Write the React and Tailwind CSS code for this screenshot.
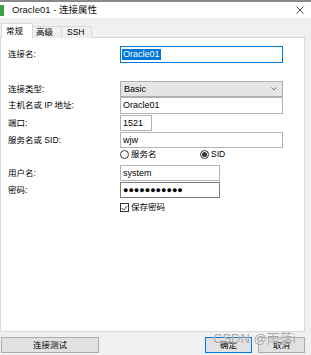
import React from 'react';

const font = { fontFamily: '"Liberation Sans", "Noto Sans CJK SC", sans-serif' };

function Label({ children }) {
  return <div className="w-[119px] pl-[7px] text-[8.5px] text-[#000] leading-none">{children}</div>;
}

function Input({ value, w = 'w-[163px]', border = 'border-[#b4b4b4]', h = 'h-[16px]' }) {
  return (
    <div className={`${w} ${h} border ${border} bg-white flex items-center px-[2px] text-[9px] text-black leading-none`}>
      {value}
    </div>
  );
}

export default function App() {
  return (
    <div className="w-[311px] h-[355px] bg-[#f0f0f0] relative overflow-hidden flex flex-col" style={font}>
      {/* Title bar */}
      <div className="h-[18px] bg-white border-t-2 border-[#8a8a8a] flex items-center relative">
        <div className="w-[4px] h-[11px] bg-[#3aa04a]" />
        <span className="ml-[8px] text-[9.5px] text-[#111] leading-none">Oracle01 - 连接属性</span>
        <svg className="absolute right-[7px] top-[4px]" width="8" height="8" viewBox="0 0 8 8">
          <path d="M0.5 0.5L7.5 7.5M7.5 0.5L0.5 7.5" stroke="#333" strokeWidth="0.9" />
        </svg>
      </div>

      {/* Tabs */}
      <div className="flex items-end mt-[5px] h-[15px] pl-[1px] relative z-10">
        <div className="w-[32px] h-[15px] bg-white border border-b-0 border-[#d9d9d9] flex items-center pl-[4px] text-[8.5px] leading-none">常规</div>
        <div className="w-[29px] h-[12px] bg-[#f0f0f0] border border-l-0 border-b-0 border-[#d9d9d9] flex items-center pl-[3px] text-[8.5px] leading-none">高级</div>
        <div className="w-[30px] h-[12px] bg-[#f0f0f0] border border-l-0 border-b-0 border-[#d9d9d9] flex items-center pl-[5px] text-[8.5px] leading-none">SSH</div>
      </div>

      {/* Panel */}
      <div className="w-[305px] h-[295px] -mt-[1px] bg-white border border-[#d9d9d9] flex flex-col">
        <div className="flex items-center mt-[8px]">
          <Label>连接名:</Label>
          <div className="w-[163px] h-[17px] border border-[#0078d7] bg-white flex items-center px-[1px]">
            <span className="bg-[#0078d7] text-white text-[9px] leading-[11px] px-[1px]">Oracle01</span>
          </div>
        </div>

        <div className="flex items-center mt-[18px]">
          <Label>连接类型:</Label>
          <div className="w-[163px] h-[16px] border border-[#adadad] bg-[#e5e5e5] flex items-center justify-between px-[3px] text-[9px] leading-none">
            <span>Basic</span>
            <svg width="6" height="4" viewBox="0 0 6 4" className="mr-[2px]">
              <path d="M0.5 0.5L3 3L5.5 0.5" fill="none" stroke="#555" strokeWidth="0.8" />
            </svg>
          </div>
        </div>

        <div className="flex items-center">
          <Label>主机名或 IP 地址:</Label>
          <Input value="Oracle01" h="h-[17px]" />
        </div>

        <div className="flex items-center mt-[1px]">
          <Label>端口:</Label>
          <Input value="1521" w="w-[32px]" />
        </div>

        <div className="flex items-center mt-[1px]">
          <Label>服务名或 SID:</Label>
          <Input value="wjw" />
        </div>

        <div className="flex items-center h-[12px] pl-[119px] text-[8.5px] leading-none">
          <div className="flex items-center w-[80px]">
            <span className="w-[9px] h-[9px] rounded-full border border-[#333] bg-white" />
            <span className="ml-[2px]">服务名</span>
          </div>
          <div className="flex items-center">
            <span className="w-[9px] h-[9px] rounded-full border border-[#333] bg-white flex items-center justify-center">
              <span className="w-[5px] h-[5px] rounded-full bg-[#333]" />
            </span>
            <span className="ml-[2px]">SID</span>
          </div>
        </div>

        <div className="flex items-center mt-[5px]">
          <Label>用户名:</Label>
          <Input value="system" w="w-[100px]" />
        </div>

        <div className="flex items-center mt-[1px]">
          <Label>密码:</Label>
          <Input value="●●●●●●●●●●●" w="w-[100px]" border="border-[#7a7a7a]" />
        </div>

        <div className="flex items-center mt-[5px] pl-[119px] text-[8.5px] leading-none">
          <span className="w-[9px] h-[9px] border border-[#333] bg-white flex items-center justify-center">
            <svg width="7" height="6" viewBox="0 0 7 6">
              <path d="M0.6 3L2.6 5L6.4 0.8" fill="none" stroke="#222" strokeWidth="0.9" />
            </svg>
          </span>
          <span className="ml-[2px]">保存密码</span>
        </div>
      </div>

      {/* Buttons */}
      <div className="flex items-center mt-[5px] h-[16px] pl-[1px]">
        <div className="w-[98px] h-[16px] bg-[#e1e1e1] border border-[#adadad] flex items-center justify-center text-[8.5px] leading-none">连接测试</div>
        <div className="ml-auto w-[47px] h-[16px] bg-[#e1e1e1] border border-[#0078d7] flex items-center justify-center text-[8.5px] leading-none">确定</div>
        <div className="ml-[6px] mr-[6px] w-[47px] h-[16px] bg-[#e1e1e1] border border-[#adadad] flex items-center justify-center text-[8.5px] leading-none">取消</div>
      </div>

      {/* Watermark */}
      <div className="absolute left-[213px] top-[332px] text-[13px] text-[#8c8c8c]/80 leading-none pointer-events-none" style={{ textShadow: '0 0 1px #fff' }}>
        CSDN @雨落i
      </div>
    </div>
  );
}
